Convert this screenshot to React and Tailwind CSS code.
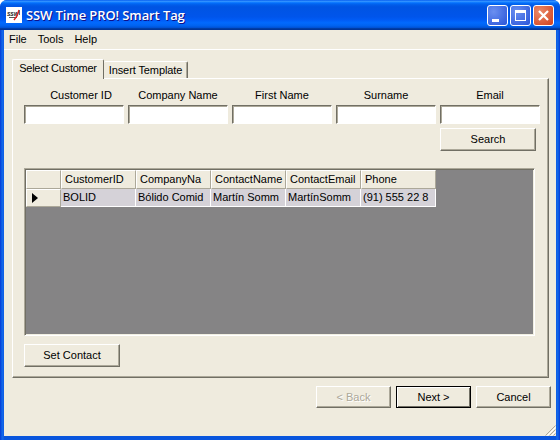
const columns = [
  { name: "CustomerID", value: "BOLID" },
  { name: "CompanyNa", value: "Bólido Comid" },
  { name: "ContactName", value: "Martín Somm" },
  { name: "ContactEmail", value: "MartínSomm" },
  { name: "Phone", value: "(91) 555 22 8" },
];

const labels = ["Customer ID", "Company Name", "First Name", "Surname", "Email"];

function Button({ className, children }) {
  return (
    <button className={`flex items-center justify-center border border-t-white border-l-white border-r-[#716f64] border-b-[#716f64] shadow-[inset_-1px_-1px_#aca899] bg-[#efebde] text-black ${className}`}>
      {children}
    </button>
  );
}

export default function App() {
  return (
    <div className="w-[560px] h-[440px] bg-white text-[11px] leading-[14px] text-black font-['Liberation_Sans',Arial,sans-serif]">
      <div className="w-full h-full flex flex-col rounded-t-[7px] overflow-hidden bg-[linear-gradient(90deg,#0831d9_0,#0855dd_1px,#166aee_3px,#0855dd_4px,#0855dd_556px,#166aee_557px,#0855dd_559px,#0831d9_100%)]">
        {/* Title bar */}
        <div className="h-[30px] shrink-0 flex items-center pl-[6px] pr-[6px] bg-[linear-gradient(180deg,#0058ee_0%,#3593ff_4%,#288eff_6%,#127dff_8%,#036ffc_10%,#0262ee_14%,#0057e5_20%,#0054e3_24%,#0055eb_56%,#005bf5_66%,#026afe_76%,#0062ef_86%,#0052d6_92%,#0040ab_94%,#003092_100%)]">
          <svg width="16" height="16" viewBox="0 0 16 16" className="shrink-0">
            <rect width="16" height="16" fill="#fff" />
            <text x="1" y="9" fontSize="5" fontWeight="bold" fontStyle="italic" fill="#111" fontFamily="Liberation Sans">SSW</text>
            <path d="M3 10.5h8" stroke="#555" strokeWidth="1" />
            <path d="M13 3L11 9L8 13" stroke="#d22" strokeWidth="1.4" fill="none" />
            <path d="M13.5 3v5" stroke="#667" strokeWidth="1" />
          </svg>
          <span className="ml-[4px] text-white text-[13px] font-['Open_Sans',sans-serif] font-semibold tracking-[-0.1px] [text-shadow:1px_1px_#0f1089]">
            SSW Time PRO! Smart Tag
          </span>
          <div className="ml-auto flex gap-[2px]">
            <div className="w-[21px] h-[21px] rounded-[3px] border border-white bg-[radial-gradient(circle_at_30%_30%,#6a8ff0,#2a55d8)] flex items-end pl-[4px] pb-[3px]">
              <div className="w-[7px] h-[3px] bg-white" />
            </div>
            <div className="w-[21px] h-[21px] rounded-[3px] border border-white bg-[radial-gradient(circle_at_30%_30%,#6a8ff0,#2a55d8)] flex items-center justify-center">
              <div className="w-[11px] h-[11px] border border-white border-t-[3px]" />
            </div>
            <div className="w-[21px] h-[21px] rounded-[3px] border border-white bg-[radial-gradient(circle_at_30%_30%,#ea8a6a,#d2401c)] flex items-center justify-center">
              <svg width="13" height="13" viewBox="0 0 13 13">
                <path d="M2 2L11 11M11 2L2 11" stroke="#fff" strokeWidth="2.2" />
              </svg>
            </div>
          </div>
        </div>

        {/* Window body */}
        <div className="relative flex-1 mx-[4px] mb-[4px] bg-[#efebde] flex flex-col">
          <div className="h-[20px] shrink-0 border-b border-white flex items-center pb-[2px] pl-[5px] gap-[11px]">
            <span>File</span>
            <span>Tools</span>
            <span>Help</span>
          </div>

          {/* Tabs */}
          <div className="mt-[9px] ml-[8px] h-[20px] shrink-0 flex items-end relative z-10">
            <div className="h-[20px] w-[92px] flex items-center justify-center pb-[4px] tracking-[-0.25px] bg-[#efebde] border-l border-t border-r border-t-white border-l-white border-r-[#716f64] rounded-t-[2px]">
              Select Customer
            </div>
            <div className="h-[17px] mb-[1px] w-[84px] flex items-center justify-center tracking-[-0.1px] border-t border-r border-t-white border-r-[#716f64] shadow-[inset_-1px_0_#aca899] rounded-t-[2px]">
              Insert Template
            </div>
          </div>

          {/* Tab panel */}
          <div className="ml-[8px] -mt-px w-[537px] h-[300px] shrink-0 border border-t-white border-l-white border-r-[#716f64] border-b-[#716f64] shadow-[inset_-1px_-1px_#aca899] pl-[11px] pr-[8px] pt-[9px] flex flex-col">
            <div className="grid grid-cols-[repeat(5,100px)] gap-x-[4px] gap-y-[3px]">
              {labels.map((label, i) => (
                <div key={label} className={i === 0 ? "text-center h-[14px] pl-[14px]" : "text-center h-[14px]"}>{label}</div>
              ))}
              {labels.map((label) => (
                <input
                  key={label}
                  className="h-[19px] w-[100px] bg-white outline-none border border-t-[#716f64] border-l-[#716f64] border-r-white border-b-white shadow-[inset_1px_1px_#aca899]"
                />
              ))}
            </div>
            <Button className="mt-[4px] ml-[416px] w-[96px] h-[23px] pb-[2px]">Search</Button>

            {/* Results grid */}
            <div className="mt-[17px] w-[511px] h-[168px] bg-[#858485] border border-t-[#aca899] border-l-[#aca899] border-r-white border-b-white p-px shadow-[inset_1px_1px_#716f64,inset_-1px_-1px_#f1efe2]">
              <div className="flex h-[19px]">
                <div className="w-[35px] border border-t-white border-l-white border-b-[#aca899] border-r-[#aca899] bg-[#efebde]" />
                {columns.map((col) => (
                  <div key={col.name} className="w-[75px] pl-[3px] pb-[2px] flex items-center whitespace-nowrap overflow-hidden border border-t-white border-l-white border-b-[#aca899] border-r-[#aca899] bg-[#efebde]">
                    {col.name}
                  </div>
                ))}
              </div>
              <div className="flex h-[18px]">
                <div className="w-[35px] flex items-center pl-[5px] border border-t-white border-l-white border-b-[#aca899] border-r-[#aca899] bg-[#efebde]">
                  <div className="w-0 h-0 border-y-[5px] border-y-transparent border-l-[6px] border-l-black" />
                </div>
                {columns.map((col) => (
                  <div key={col.name} className="w-[75px] pl-[2px] pb-[2px] flex items-center whitespace-nowrap overflow-hidden bg-[#d5d2d8] border-r border-b border-white">
                    {col.value}
                  </div>
                ))}
              </div>
            </div>

            <Button className="mt-[8px] w-[96px] h-[23px] pb-[2px]">Set Contact</Button>
          </div>

          {/* Wizard buttons */}
          <div className="mt-[8px] pl-[312px] flex gap-[5px]">
            <Button className="w-[75px] h-[22px] !text-[#aca899] [text-shadow:1px_1px_#fff]">&lt; Back</Button>
            <button className="w-[75px] h-[22px] flex items-center justify-center border border-black shadow-[inset_1px_1px_#fff,inset_-1px_-1px_#716f64] bg-[#efebde]">
              Next &gt;
            </button>
            <Button className="w-[75px] h-[22px]">Cancel</Button>
          </div>

          {/* Resize grip */}
          <svg width="12" height="12" viewBox="0 0 12 12" className="absolute right-0 bottom-0">
            <path d="M11.5 1.5L1.5 11.5M11.5 5.5L5.5 11.5M11.5 9.5L9.5 11.5" stroke="#aca899" strokeWidth="1" />
            <path d="M11.5 3.5L3.5 11.5M11.5 7.5L7.5 11.5" stroke="#fff" strokeWidth="1" />
          </svg>
        </div>
      </div>
    </div>
  );
}
